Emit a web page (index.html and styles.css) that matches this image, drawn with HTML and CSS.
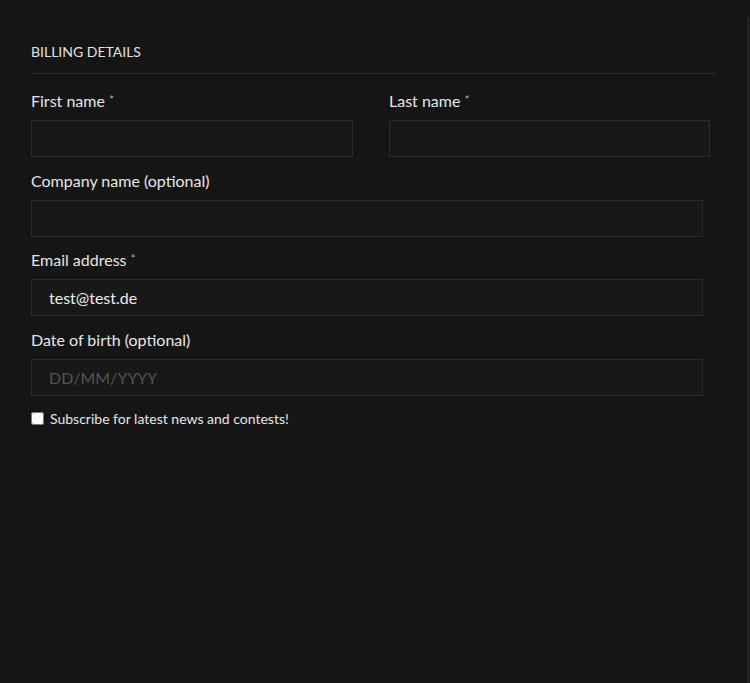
FILE: index.html
```html
<!DOCTYPE html>
<html lang="en">
<head>
<meta charset="utf-8">
<title>Billing details</title>
<link rel="stylesheet" href="styles.css">
</head>
<body>
<div class="edge"></div>
<form class="billing">
  <h3 class="billing-title">BILLING DETAILS</h3>
  <div class="row-two">
    <div class="field">
      <label class="field-label">First name <span class="req">*</span></label>
      <input class="field-input half" type="text">
    </div>
    <div class="field">
      <label class="field-label">Last name <span class="req">*</span></label>
      <input class="field-input half" type="text">
    </div>
  </div>
  <div class="field">
    <label class="field-label">Company name (optional)</label>
    <input class="field-input full" type="text">
  </div>
  <div class="field">
    <label class="field-label">Email address <span class="req">*</span></label>
    <input class="field-input full" type="email" value="test@test.de">
  </div>
  <div class="field">
    <label class="field-label">Date of birth (optional)</label>
    <input class="field-input full" type="text" placeholder="DD/MM/YYYY">
  </div>
  <label class="subscribe"><input class="subscribe-box" type="checkbox"> Subscribe for latest news and contests!</label>
</form>
</body>
</html>
```

FILE: styles.css
```css
html, body {
  margin: 0;
  padding: 0;
  background: #151515;
  height: 100%;
}
body {
  font-family: Lato, "Open Sans", sans-serif;
  color: #e6e6e6;
  position: relative;
  overflow: hidden;
}
.edge {
  position: absolute;
  top: 17px;
  right: 0;
  bottom: 0;
  width: 2px;
  background: #1d1d1d;
  border-left: 1px solid #2a2a2a;
}
.billing {
  width: 685px;
  padding: 42px 0 0 31px;
  display: flex;
  flex-direction: column;
}
.billing-title {
  margin: 0;
  font-size: 14px;
  font-weight: 400;
  line-height: 20px;
  color: #e2e2e2;
  padding-bottom: 11px;
  border-bottom: 1px solid #2a2a2a;
  margin-bottom: 15px;
}
.row-two {
  display: grid;
  grid-template-columns: 322px 321px;
  column-gap: 36px;
}
.field {
  display: flex;
  flex-direction: column;
  align-items: flex-start;
  margin-bottom: 11.67px;
}
.field-label {
  font-size: 16px;
  line-height: 24px;
  color: #e6e6e6;
  margin-bottom: 7px;
}
.req {
  font-size: 12px;
  color: #aaa;
  vertical-align: top;
  position: relative;
  top: -1px;
}
.field-input {
  box-sizing: border-box;
  height: 37px;
  background: #181818;
  border: 1px solid #2b2b2b;
  border-radius: 0;
  color: #ececec;
  font-family: Lato, "Open Sans", sans-serif;
  font-size: 16px;
  padding: 0 17px;
  outline: none;
}
.field-input::placeholder {
  color: #545454;
}
.half { width: 100%; }
.full { width: 672px; }
.subscribe {
  display: flex;
  align-items: center;
  font-size: 14px;
  line-height: 22px;
  color: #e6e6e6;
}
.subscribe-box {
  width: 13px;
  height: 13px;
  margin: 0 6px 0 0;
}
```
